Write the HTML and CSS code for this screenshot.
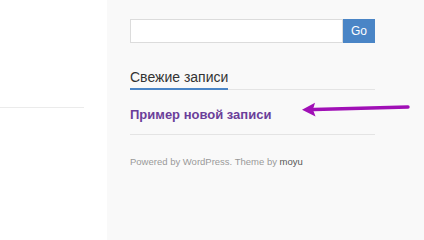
FILE: index.html
```html
<!DOCTYPE html>
<html lang="ru">
<head>
    <meta charset="UTF-8">
    <title>Свежие записи</title>
    <link rel="stylesheet" href="styles.css">
</head>
<body>
    <div class="page">
        <div class="content">
            <div class="rule"></div>
        </div>
        <aside class="sidebar">
            <form class="search">
                <input type="text" class="search-field">
                <button type="button" class="search-btn">Go</button>
            </form>
            <div class="widget">
                <h2 class="widget-title"><span>Свежие записи</span></h2>
                <ul class="recent">
                    <li><a href="#">Пример новой записи</a></li>
                </ul>
            </div>
            <p class="credits">Powered by WordPress. Theme by <a href="#">moyu</a></p>
        </aside>
        <svg class="arrow" width="112" height="18" viewBox="0 0 112 18">
            <path d="M106 6 L12 8.5" stroke="#a010b6" stroke-width="3.4" stroke-linecap="round" fill="none"/>
            <path d="M0 8.8 L13 1.8 L11 8.6 L13.5 15.5 Z" fill="#a010b6"/>
        </svg>
    </div>
</body>
</html>
```

FILE: styles.css
```css
body {
    margin: 0;
    font-family: "Liberation Sans", Arial, sans-serif;
    background: #fff;
}
.page {
    position: relative;
    display: flex;
    height: 240px;
}
.content {
    width: 107px;
    background: #fff;
}
.rule {
    width: 84px;
    margin-top: 107px;
    border-top: 1px solid #ebebeb;
}
.sidebar {
    flex: 1;
    background: #f9f9f9;
    padding: 19px 49px 0 23px;
}
.search {
    display: flex;
    margin: 0;
}
.search-field {
    width: 213px;
    height: 24px;
    box-sizing: border-box;
    border: 1px solid #dcdcdc;
    background: #fff;
    margin: 0;
    padding: 0 6px;
}
.search-btn {
    width: 32px;
    height: 24px;
    border: none;
    margin: 0;
    padding: 0;
    background: #4a85c6;
    color: #fff;
    font-family: "Liberation Sans", Arial, sans-serif;
    font-size: 12px;
}
.widget {
    margin-top: 26px;
}
.widget-title {
    margin: 0;
    font-size: 14px;
    font-weight: normal;
    color: #333;
    line-height: 16px;
    border-bottom: 1px solid #e4e4e4;
}
.widget-title span {
    display: inline-block;
    padding-bottom: 3px;
    border-bottom: 2px solid #4a85c6;
    margin-bottom: -1px;
}
.recent {
    list-style: none;
    margin: 0;
    padding: 0;
}
.recent li {
    padding: 15px 0 11px;
    border-bottom: 1px solid #e4e4e4;
    line-height: 17px;
}
.recent a {
    color: #6b3e9a;
    font-weight: bold;
    font-size: 13px;
    text-decoration: none;
}
.credits {
    margin: 21px 0 0;
    font-size: 9.5px;
    line-height: 11px;
    color: #999;
}
.credits a {
    color: #555;
    text-decoration: none;
}
.arrow {
    position: absolute;
    left: 302px;
    top: 101px;
}
```
